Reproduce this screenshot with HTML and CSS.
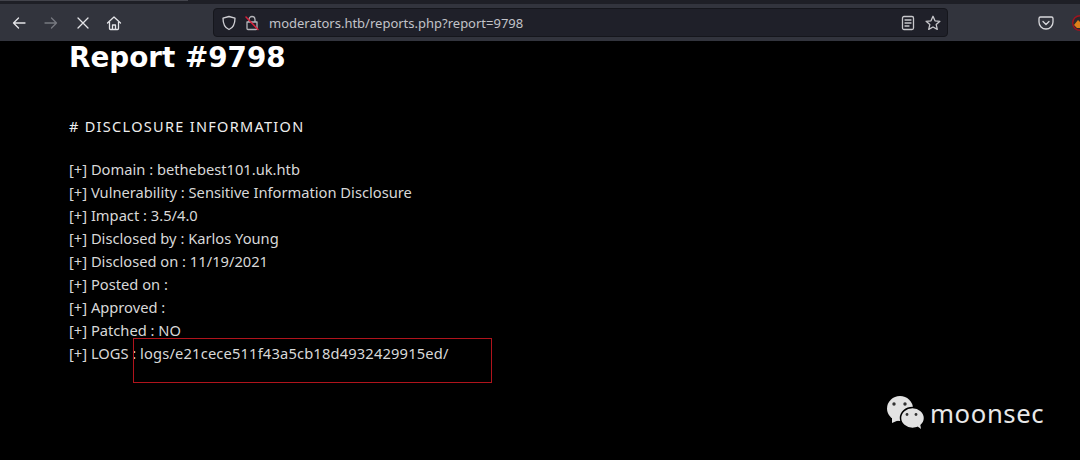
FILE: index.html
```html
<!DOCTYPE html>
<html lang="en">
<head>
<meta charset="utf-8">
<title>Report #9798</title>
<link rel="stylesheet" href="styles.css">
</head>
<body>
<header class="chrome">
  <div class="tabstrip"><div class="tabedge"></div></div>
  <div class="toolbar">
    <svg class="ico back" viewBox="0 0 16 16"><path d="M14 8H2.500M7.500 3 2.500 8l5 5"/></svg>
    <svg class="ico fwd" viewBox="0 0 16 16"><path d="M2 8h11.500M8.500 3l5 5-5 5"/></svg>
    <svg class="ico stop" viewBox="0 0 16 16"><path d="M3 3l10 10M13 3 3 13"/></svg>
    <svg class="ico home" viewBox="0 0 16 16"><path d="M1.500 8 8 2l6.500 6M3.500 7v6.500a1 1 0 0 0 1 1h7a1 1 0 0 0 1-1V7M6.500 14.500V10h3v4.500"/></svg>
    <div class="urlbar">
      <svg class="ico shield" viewBox="0 0 16 16"><path d="M8 1.500 2 3.200c0 6 1.500 9.500 6 11.300 4.500-1.800 6-5.300 6-11.300z"/></svg>
      <svg class="ico lock" viewBox="0 0 16 16"><path class="lockbody" d="M3 7h10v6.500a1 1 0 0 1-1 1H4a1 1 0 0 1-1-1zM5 7V4.500a3 3 0 0 1 6 0V7"/><path class="slash" d="M2 2l12 12.500"/></svg>
      <span class="url">moderators.htb/reports.php?report=9798</span>
      <svg class="ico reader" viewBox="0 0 16 16"><rect x="2.500" y="1.500" width="11" height="13" rx="1.500"/><path d="M5 5h6M5 8h6M5 11h4"/></svg>
      <svg class="ico star" viewBox="0 0 16 16"><path d="M8 1.300l2 4.500 4.900.5-3.700 3.300 1.100 4.800L8 12l-4.300 2.400 1.100-4.800L1.100 6.300 6 5.800z"/></svg>
    </div>
    <svg class="ico pocket" viewBox="0 0 16 16"><path d="M2.500 2h11A1.500 1.500 0 0 1 15 3.500V7a7 7 0 0 1-14 0V3.500A1.500 1.500 0 0 1 2.500 2z"/><path d="M5 6.500l3 3 3-3"/></svg>
    <svg class="ext" viewBox="0 0 16 16"><circle cx="8" cy="8" r="7.300" fill="#2a2a2e" stroke="#a3131f" stroke-width="1.400"/><path d="M2 10l4-5 2 2 5-1v5l-3 2H5z" fill="#e0801a"/></svg>
  </div>
</header>
<main class="page">
  <h1 class="title">Report #9798</h1>
  <h2 class="section"># DISCLOSURE INFORMATION</h2>
  <ul class="facts">
    <li>[+] Domain : bethebest101.uk.htb</li>
    <li>[+] Vulnerability : Sensitive Information Disclosure</li>
    <li>[+] Impact : 3.5/4.0</li>
    <li>[+] Disclosed by : Karlos Young</li>
    <li>[+] Disclosed on : 11/19/2021</li>
    <li>[+] Posted on :</li>
    <li>[+] Approved :</li>
    <li>[+] Patched : NO</li>
    <li>[+] LOGS : <span class="logpath">logs/e21cece511f43a5cb18d4932429915ed/</span></li>
  </ul>
</main>
<div class="highlight"></div>
<div class="mark">
  <svg class="wechat" viewBox="0 0 38 34">
    <ellipse cx="14" cy="13.500" rx="13" ry="12.500" fill="#e2e2e2"/>
    <path d="M6 22l0 6 7-3z" fill="#e2e2e2"/>
    <ellipse cx="26.500" cy="23" rx="12" ry="10.500" fill="#e2e2e2" stroke="#000" stroke-width="1.500"/>
    <path d="M31 31l4 3-1-6z" fill="#e2e2e2"/>
    <circle cx="8" cy="9" r="1.700" fill="#333"/><circle cx="19" cy="9" r="1.700" fill="#333"/>
    <circle cx="21" cy="19.500" r="1.400" fill="#333"/><circle cx="30" cy="19.500" r="1.400" fill="#333"/>
  </svg>
  <span class="brand">moonsec</span>
</div>
</body>
</html>
```
FILE: styles.css
```css
* { box-sizing: border-box; }
html, body { margin: 0; height: 460px; overflow: hidden; }
body { background: #000; position: relative; font-family: "Noto Sans", "Liberation Sans", sans-serif; }

.chrome { background: #32343d; height: 41px; }
.tabstrip { height: 4px; background: #1e1f26; }
.tabedge { width: 188px; height: 1px; background: #42434b; }
.toolbar { display: flex; align-items: center; height: 37px; padding-left: 11px; }

.ico { width: 16px; height: 16px; flex: none; fill: none; stroke: #e4e4e8; stroke-width: 1.300; stroke-linecap: round; stroke-linejoin: round; }
.fwd { margin-left: 16px; stroke: #777980; }
.stop { margin-left: 16px; }
.home { margin-left: 15px; }

.urlbar { display: flex; flex: none; align-items: center; width: 735px; height: 29px; margin-left: 91px; padding: 0 6px 0 7px; background: #1f2029; border: 1px solid #15161c; border-radius: 4px; }
.shield { stroke: #cfcfd4; }
.lock { margin-left: 7px; }
.lockbody { stroke: #b5b5ba; }
.slash { stroke: #d8213b; stroke-width: 1.500; }
.url { margin-left: 9px; flex: 1; color: #c2c3c8; font-size: 13px; white-space: nowrap; }
.reader { stroke: #c8c8cc; }
.star { margin-left: 9px; stroke: #c8c8cc; }
.pocket { margin-left: 90px; stroke: #d8d8dc; }
.ext { width: 16px; height: 16px; flex: none; margin-left: 18px; }

.page { padding: 0 0 0 69px; color: #d8d8d8; }
.title { margin: 1px 0 0; font-family: "DejaVu Sans", sans-serif; font-weight: 700; font-size: 27.800px; line-height: 32px; color: #fff; }
.section { margin: 42px 0 0; font-size: 14.500px; font-weight: 400; line-height: 20px; letter-spacing: 1.300px; color: #eee; }
.facts { list-style: none; margin: 22px 0 0; padding: 0; font-size: 14.700px; line-height: 23px; }
.logpath { letter-spacing: .16px; }

.highlight { position: absolute; left: 133px; top: 338px; width: 359px; height: 45px; border: 1px solid #b0141c; }
.mark { position: absolute; left: 886px; top: 394px; display: flex; align-items: center; gap: 6px; }
.wechat { width: 38px; height: 34px; }
.brand { font-size: 25.700px; line-height: 30px; padding-top: 5px; color: #e8e8e8; letter-spacing: .6px; }
```
